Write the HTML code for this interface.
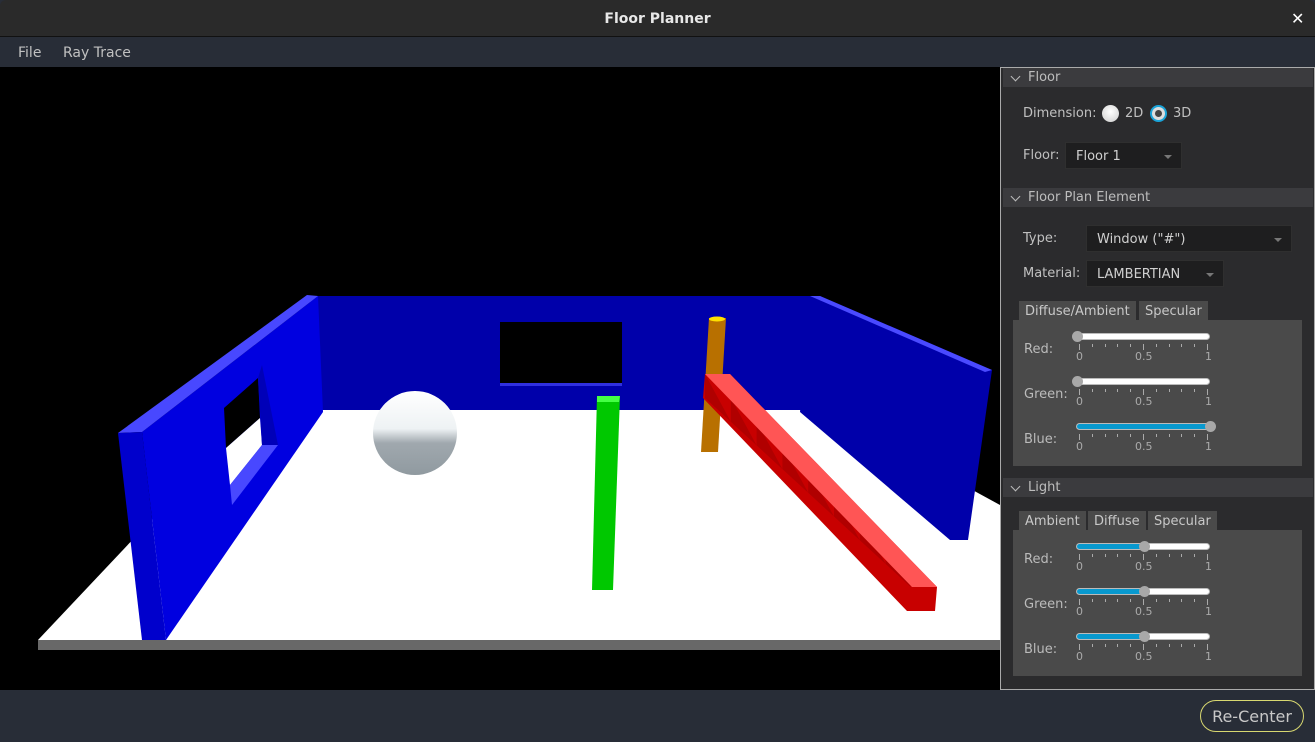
<!DOCTYPE html>
<html><head><meta charset="utf-8"><style>
*{margin:0;padding:0;box-sizing:border-box}
body{width:1315px;height:742px;overflow:hidden;background:#282d37;font-family:"DejaVu Sans","Liberation Sans",sans-serif;position:relative;color:#c8c8c8}
.a{position:absolute}
.t{font-size:13px;white-space:nowrap}
.hdr{position:absolute;left:1003px;width:310px;height:19px;background:#3b3b3e;color:#bdbdbd;font-size:13px;line-height:20px;padding-left:25px}
.hdr:before{content:"";position:absolute;left:9px;top:5px;width:6px;height:6px;border-right:1.3px solid #bbb;border-bottom:1.3px solid #bbb;transform:rotate(45deg)}
.combo{position:absolute;background:#1e1e1f;border:1px solid #2f2f2f;color:#d0d0d0;font-size:13px;line-height:27px;padding-left:10px;height:27px}
.combo:after{content:"";position:absolute;right:9px;top:12px;border-left:4px solid transparent;border-right:4px solid transparent;border-top:4px solid #777}
.tab{position:absolute;height:19px;background:#4a4a4a;color:#c8c8c8;font-size:13px;line-height:21px;padding:0 6px}
.pane{position:absolute;background:#4a4a4a}
.sl{position:absolute;left:1076px;width:134px;height:30px}
.tr{position:absolute;left:0;top:0;width:134px;height:7px;border-radius:4px;background:#fff;border:1px solid #bbb;overflow:hidden}
.fill{position:absolute;left:0;top:0;height:7px;background:#0899cf}
.th{position:absolute;top:-2px;width:11px;height:11px;border-radius:50%;background:#a8a8a8;margin-left:-5px}
.tk{position:absolute;top:11px;width:1px;height:3px;background:#aaa}
.tk.M{height:6px}
.n{position:absolute;top:17px;font-size:11px;color:#aaa}
.lab{position:absolute;left:1024px;font-size:13px;color:#bbb}
</style></head><body>
<div class="a" style="left:0;top:0;width:1315px;height:36px;background:#2a2a2a;border-radius:6px 6px 0 0"></div>
<div class="a" style="left:0;top:36px;width:1315px;height:1px;background:#111"></div>
<div class="a t" style="left:0;width:1315px;top:11px;text-align:center;font-weight:bold;color:#e8e8e8;font-size:14px">Floor Planner</div>
<div class="a" style="left:1291px;top:9px;color:#fff;font-size:16px;font-weight:bold">✕</div>
<div class="a t" style="left:18px;top:45px;font-size:14px;color:#c0c0c0">File</div>
<div class="a t" style="left:63px;top:45px;font-size:14px;color:#c0c0c0">Ray Trace</div>
<div class="a" style="left:0;top:67px;width:1001px;height:623px;background:#000"></div>

<svg class="a" style="left:0;top:67px" width="1001" height="623" viewBox="0 67 1001 623">
<polygon points="810,296 310,296 310,412 826,412" fill="#0000aa"/>
<polygon points="500,322 622,322 622,385 500,385" fill="#000"/>
<rect x="500" y="383" width="122" height="3" fill="#3030e0"/>
<polygon points="38,640 255,410 826,410 1000,505 1000,640" fill="#fff"/>
<rect x="38" y="640" width="962" height="10" fill="#686868"/>
<polygon points="810,296 820,296 992,370 968,540 950,540 800,412" fill="#0000aa"/>
<polygon points="810,296 820,296 992,370 985,372" fill="#4a4aff"/>
<polygon points="142,432 318,296 323,412 166,640" fill="#0000e0"/>
<polygon points="118,433 307,295 318,296 142,432" fill="#4848ff"/>
<polygon points="118,433 142,432 166,640 142,640" fill="#0000cc"/>
<polygon points="224,408 258,378 260,418 226,448" fill="#000"/>
<polygon points="226,448 260,418 262,445 230,485" fill="#fff"/>
<polygon points="258,378 262,365 278,445 262,445" fill="#0000b8"/>
<polygon points="230,485 262,445 278,445 232,505" fill="#4848ff"/>
<defs><linearGradient id="sp" x1="0" y1="0" x2="0" y2="1"><stop offset="0" stop-color="#fff"/><stop offset="0.45" stop-color="#eef2f4"/><stop offset="0.62" stop-color="#a0a8ae"/><stop offset="1" stop-color="#909aa0"/></linearGradient></defs>
<circle cx="415" cy="433" r="42" fill="url(#sp)"/>
<polygon points="597,396 620,396 613,590 592,590" fill="#00c800"/>
<polygon points="597,396 620,396 619,402 597,402" fill="#44ff44"/>
<polygon points="709,318 726,318 718,452 701,452" fill="#b87000"/>
<ellipse cx="717" cy="319" rx="8" ry="2.5" fill="#ffe000"/>
<polygon points="705,374 730,374 937,587 935,611 907,611 703,398" fill="#c80000"/>
<g id="steps"></g>
<polygon points="705,374 730,374 937,587 912,587" fill="#ff5555"/>
</svg>
<script>
var g='';for(var i=0;i<8;i++){var x=705+i*25.8,y=374+i*23.7;g+='<polygon points="'+x+','+y+' '+(x+25.8)+','+(y+23.7+24)+' '+x+','+(y+24)+'" fill="#b00000"/>';}
document.getElementById('steps').innerHTML=g;
</script>

<div class="a" style="left:1000px;top:67px;width:315px;height:623px;border:1px solid #aaa;background:#2b2b2d"></div>
<div class="hdr" style="top:68px">Floor</div>
<div class="a t" style="left:1023px;top:106px;color:#c0c0c0">Dimension:</div>
<div class="a" style="left:1102px;top:105px;width:17px;height:17px;border-radius:50%;background:radial-gradient(circle at 50% 40%,#fff,#ccc)"></div>
<div class="a t" style="left:1125px;top:106px;color:#c0c0c0">2D</div>
<div class="a" style="left:1150px;top:105px;width:17px;height:17px;border-radius:50%;background:#ddd;border:2px solid #1aa3d8"></div>
<div class="a" style="left:1155px;top:110px;width:7px;height:7px;border-radius:50%;background:#444"></div>
<div class="a t" style="left:1173px;top:106px;color:#c0c0c0">3D</div>
<div class="a t" style="left:1023px;top:148px;color:#c0c0c0">Floor:</div>
<div class="combo" style="left:1065px;top:142px;width:117px">Floor 1</div>
<div class="hdr" style="top:188px">Floor Plan Element</div>
<div class="a t" style="left:1023px;top:231px;color:#c0c0c0">Type:</div>
<div class="combo" style="left:1086px;top:225px;width:206px">Window ("#")</div>
<div class="a t" style="left:1023px;top:266px;color:#c0c0c0">Material:</div>
<div class="combo" style="left:1086px;top:260px;width:138px">LAMBERTIAN</div>
<div class="tab" style="left:1019px;top:301px">Diffuse/Ambient</div>
<div class="tab" style="left:1139px;top:301px">Specular</div>
<div class="pane" style="left:1013px;top:320px;width:289px;height:146px"></div>
<div class="hdr" style="top:478px">Light</div>
<div class="tab" style="left:1019px;top:511px">Ambient</div>
<div class="tab" style="left:1088px;top:511px">Diffuse</div>
<div class="tab" style="left:1148px;top:511px">Specular</div>
<div class="pane" style="left:1013px;top:530px;width:289px;height:146px"></div>

<div class="lab" style="top:342px">Red:</div>
<div class="lab" style="top:387px">Green:</div>
<div class="lab" style="top:432px">Blue:</div>
<div class="lab" style="top:552px">Red:</div>
<div class="lab" style="top:597px">Green:</div>
<div class="lab" style="top:642px">Blue:</div>

<div id="sliders"></div>
<script>
var s=[[333,0],[378,0],[423,1],[543,.5],[588,.5],[633,.5]],h='';
s.forEach(function(a){var w=a[1]*133;h+='<div class="sl" style="top:'+a[0]+'px"><div class="tr"><div class="fill" style="width:'+w+'px"></div></div><div class="th" style="left:'+(w+1)+'px"></div>';
for(var i=0;i<=10;i++){h+='<div class="tk'+(i%5==0?' M':'')+'" style="left:'+(3+i*12.8)+'px"></div>';}
h+='<div class="n" style="left:0px">0</div><div class="n" style="left:59px">0.5</div><div class="n" style="left:129px">1</div></div>';});
document.getElementById('sliders').innerHTML=h;
</script>

<div class="a" style="left:1200px;top:700px;width:104px;height:32px;border:1px solid #d8d870;border-radius:16px;color:#c8c8c8;font-size:16px;line-height:31px;text-align:center">Re-Center</div>
</body></html>
